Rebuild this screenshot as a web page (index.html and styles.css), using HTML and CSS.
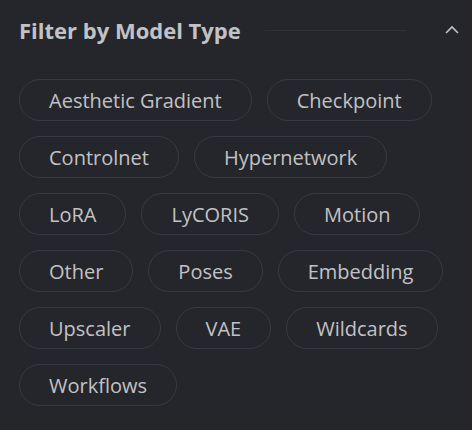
FILE: index.html
```html
<!DOCTYPE html>
<html>
<head>
<meta charset="utf-8">
<link rel="stylesheet" href="styles.css">
</head>
<body>
<div class="panel">
  <div class="header">
    <h2 class="title">Filter by Model Type</h2>
    <div class="divider"></div>
    <svg class="chevron" width="16" height="10" viewBox="0 0 16 10"><path d="M2 8 L8 2 L14 8" fill="none" stroke="#c1c2c5" stroke-width="1.6"/></svg>
  </div>
  <div class="chips">
    <span class="chip">Aesthetic Gradient</span>
    <span class="chip">Checkpoint</span>
    <span class="chip">Controlnet</span>
    <span class="chip">Hypernetwork</span>
    <span class="chip">LoRA</span>
    <span class="chip">LyCORIS</span>
    <span class="chip">Motion</span>
    <span class="chip">Other</span>
    <span class="chip">Poses</span>
    <span class="chip">Embedding</span>
    <span class="chip">Upscaler</span>
    <span class="chip">VAE</span>
    <span class="chip">Wildcards</span>
    <span class="chip">Workflows</span>
  </div>
</div>
</body>
</html>
```
FILE: styles.css
```css
html, body {
  margin: 0;
  padding: 0;
  background: #25262b;
  height: 100%;
}
body {
  font-family: "Open Sans", sans-serif;
  color: #c1c2c5;
}
.panel {
  padding: 16px 10px 0 19px;
}
.header {
  display: flex;
  align-items: center;
  height: 28px;
}
.title {
  margin: 0;
  font-size: 22px;
  font-weight: 700;
  color: #c1c2c5;
  white-space: nowrap;
}
.divider {
  width: 141px;
  height: 1px;
  background: #2f3136;
  margin-left: 24px;
}
.chevron {
  margin-left: auto;
  margin-right: 2px;
}
.chips {
  display: flex;
  flex-wrap: wrap;
  gap: 15px;
  margin-top: 35px;
  width: 434px;
}
.chip {
  box-sizing: border-box;
  height: 42px;
  padding: 0 29px;
  border: 1px solid #373a40;
  border-radius: 21px;
  display: flex;
  align-items: center;
  font-size: 20px;
  color: #c1c2c5;
}
```
